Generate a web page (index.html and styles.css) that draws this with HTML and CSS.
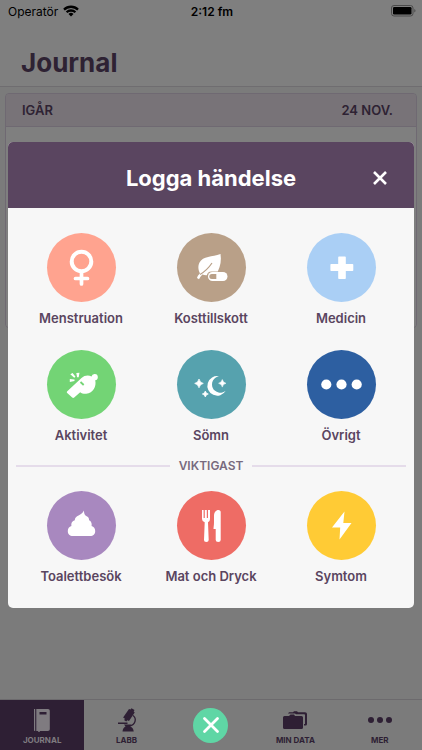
FILE: index.html
```html
<!DOCTYPE html>
<html lang="sv">
<head>
<meta charset="utf-8">
<meta name="viewport" content="width=device-width, initial-scale=1">
<title>Journal</title>
<link rel="stylesheet" href="styles.css">
</head>
<body>
<div class="app">
  <div class="status">
    <div class="carrier"><span>Operatör</span>
      <svg width="16" height="12" viewBox="0 0 16 12" aria-hidden="true"><g fill="none" stroke="#000" stroke-width="2.3"><path d="M1 4.6a10 10 0 0 1 14 0"/><path d="M3.6 7.3a6.3 6.3 0 0 1 8.8 0"/></g><path d="M8 11.6 5.5 9a3.6 3.6 0 0 1 5 0z"/></svg>
    </div>
    <time class="clock">2:12 fm</time>
    <div class="battery">
      <svg width="25" height="12" viewBox="0 0 25 12" aria-hidden="true"><rect x=".5" y=".5" width="21.500" height="10.500" rx="2.500" fill="none" stroke="#4b4b4b"/><rect x="2" y="2" width="18.500" height="7.500" rx="1.300"/><path d="M23.300 4c1.600.4 1.600 3.100 0 3.500z" fill="#4b4b4b"/></svg>
    </div>
  </div>
  <header class="page-head"><h1>Journal</h1></header>
  <main class="content">
    <section class="day">
      <div class="day-head"><h2>IGÅR</h2><span>24 NOV.</span></div>
      <div class="day-body"></div>
    </section>
  </main>
  <nav class="tabs">
    <a href="#journal" class="tab active">
      <svg width="18" height="24" viewBox="0 0 18 24" aria-hidden="true"><path fill="currentColor" d="M1 1h1.200v22H1.500Q1 23 1 22zM3.300 1H15q1.800 0 1.800 1.800v18.400Q16.800 23 15 23H7v1l-1-.6-1 .6v-1H3.300z"/><path fill="#2e1f34" d="M6.500 4h7v2.500h-7z"/></svg>
      <span>JOURNAL</span></a>
    <a href="#labb" class="tab">
      <svg width="20" height="24" viewBox="0 0 20 24" aria-hidden="true"><g fill="currentColor"><path d="m13.500 1.500 1-1.300 3 1.900-.8 1.500 1 .8-5.700 8.600-1.700-.8-1 1.200-2-1.200.5-1.600-1.700-1.200 5.900-8.400zM1 14.500h9.500V16H1zM5.500 23.500c.2-2.600 1.500-4.200 3-5l-1.500-2h7l-.8 2c2 .8 3.300 2.500 3.500 5z"/></g><path d="M16 7.500c4 3 2.500 9.500-3.500 10.500" fill="none" stroke="currentColor" stroke-width="1.300"/></svg>
      <span>LABB</span></a>
    <button class="fab" type="button" aria-label="Stäng meny">
      <svg width="18" height="18" viewBox="0 0 18 18" aria-hidden="true"><path d="m2.500 2.500 13 13m0-13-13 13" fill="none" stroke="#fff" stroke-width="2.800" stroke-linecap="round"/></svg>
    </button>
    <a href="#data" class="tab">
      <svg width="24" height="24" viewBox="0 0 24 24" aria-hidden="true"><g fill="currentColor"><path d="M0 9.500Q0 8 1.500 8H6l1.500-1.500H11L12 8h6.500Q20 8 20 9.500v10q0 1.500-1.500 1.500h-17Q0 21 0 19.500z"/><path d="m5 5.500 1-1.300h4l1-1h3l1 1h7q2 0 2 1.800V16q0 1.500-1.500 1.500H21V16h1V7q0-.8-.8-.8H13L12 5.500z"/></g></svg>
      <span>MIN DATA</span></a>
    <a href="#mer" class="tab">
      <svg width="24" height="24" viewBox="0 0 24 24" aria-hidden="true"><g fill="currentColor"><circle cx="3" cy="12" r="3"/><circle cx="12" cy="12" r="3"/><circle cx="21" cy="12" r="3"/></g></svg>
      <span>MER</span></a>
  </nav>

  <div class="modal" role="dialog" aria-labelledby="log-title">
    <div class="modal-head">
      <h2 id="log-title">Logga händelse</h2>
      <button class="close" type="button" aria-label="Stäng"><svg width="16" height="16" viewBox="0 0 16 16" aria-hidden="true"><path d="m2 2 12 12M14 2 2 14" fill="none" stroke="#fff" stroke-width="2.600"/></svg></button>
    </div>
    <div class="modal-body">
      <div class="events">
        <button class="event" type="button"><span class="disc salmon">
          <svg width="69" height="69" viewBox="0 0 69 69" aria-hidden="true"><g fill="none" stroke="#fff" stroke-linecap="round"><circle cx="34.500" cy="28.500" r="9.800" stroke-width="4"/><path d="M34.500 40v11M28.500 45.500h12" stroke-width="3.700"/></g></svg></span>Menstruation</button>
        <button class="event" type="button"><span class="disc brown">
          <svg width="69" height="69" viewBox="0 0 69 69" aria-hidden="true"><path fill="#fff" d="M43.500 21C35 24 26 23 22.500 29.500c-2 4-1 8 .5 10.800-1.500 1.600-2.600 3-3 4.700l2 1.200c.8-1.700 2-3.300 3.400-4.600 1.500.5 3 .7 4.400.6.6-2.300 2-3.600 4.400-3.700h6.600C43.500 33 44.500 27 43.500 21z"/><path d="M23 41.500c5-3 9-7 12-11.500" fill="none" stroke="#b9a088" stroke-width="1.200"/><rect x="31" y="39" width="19.500" height="9" rx="4.500" fill="#fff"/><path fill="#b9a088" d="M34.800 41h4.500v5h-4.500a2.500 2.500 0 0 1 0-5z"/></svg></span>Kosttillskott</button>
        <button class="event" type="button"><span class="disc sky">
          <svg width="69" height="69" viewBox="0 0 69 69" aria-hidden="true"><path fill="#fff" d="M32 23.500h6q.8 0 .8.800V31h6.700q.8 0 .8.800v5.400q0 .8-.8.800h-6.700v7.200q0 .8-.8.800h-6q-.8 0-.8-.8V38h-7q-.8 0-.8-.8v-5.400q0-.8.800-.8h7v-6.700q0-.8.800-.8z"/></svg></span>Medicin</button>
        <button class="event" type="button"><span class="disc green">
          <svg width="69" height="69" viewBox="0 0 69 69" aria-hidden="true"><path fill="#fff" d="M20 41.500 34.500 28c3-2.800 7-3.200 10-1.500a3.200 3.200 0 1 1 3.700 3.800c1.500 6-2 12.800-9 13.500-2.500.2-4.500-.4-6-1.500l-6 5.200q-1 .8-2 0l-5-4.500q-.8-.8-.2-1.500z"/><path d="m33.500 32 3.200 3" stroke="#73d475" stroke-width="1.800"/><path fill="#fff" d="m29.300 23 3.200-.3-.8 4.600h-1.600zM23.300 24.300l2.300-1.400 2.900 3.800-1.300 1zM22.800 29l4.700.5v1.600l-4.700.8z"/></svg></span>Aktivitet</button>
        <button class="event" type="button"><span class="disc teal">
          <svg width="69" height="69" viewBox="0 0 69 69" aria-hidden="true"><g fill="#fff"><path d="M42 26.200a8.300 8.300 0 1 0 6.700 14.500A9.800 9.800 0 1 1 42 26.200z"/><path d="M45.300 29.500q.7 3.200 3.700 3.800-3 .6-3.700 3.800-.7-3.200-3.700-3.800 3-.6 3.700-3.800z" stroke="#fff" stroke-width=".5"/><path d="M22 29q.8 3.600 4.300 4.400-3.500.8-4.300 4.400-.8-3.600-4.300-4.400 3.500-.8 4.300-4.400zM28.300 41q.5 2.500 3 3-2.500.5-3 3-.5-2.500-3-3 2.500-.5 3-3z" stroke="#fff" stroke-linejoin="round" stroke-width=".7"/></g></svg></span>Sömn</button>
        <button class="event" type="button"><span class="disc blue">
          <svg width="69" height="69" viewBox="0 0 69 69" aria-hidden="true"><g fill="#fff"><circle cx="19.300" cy="34.500" r="5.100"/><circle cx="34.500" cy="34.500" r="5.100"/><circle cx="49.700" cy="34.500" r="5.100"/></g></svg></span>Övrigt</button>
      </div>
      <div class="divider"><span>VIKTIGAST</span></div>
      <div class="events">
        <button class="event" type="button"><span class="disc purple">
          <svg width="69" height="69" viewBox="0 0 69 69" aria-hidden="true"><path fill="#fff" d="M36.800 19.500c-.8 2.300-2.500 3.500-4.800 4.800-3 1.500-4.300 2.600-4.200 5-2.600.6-4 2.700-3.400 5.700-2.200.8-3.600 2.500-3.600 5 0 3.500 2 5 5 5h17.400c3 0 5-1.500 5-5 0-2.500-1.400-4.200-3.600-5 .5-2.700-.5-5-2.500-5.800 0-2.500-1.300-3.500-3.300-4.400-1.500-.9-1.700-3.500-2-5.300z"/></svg></span>Toalettbesök</button>
        <button class="event" type="button"><span class="disc red">
          <svg width="69" height="69" viewBox="0 0 69 69" aria-hidden="true"><path fill="#fff" d="M25 19h1.600v8h1.200v-8h2v8H31v-8h2v9q0 2.500-2 3.200l.7 17.800q0 2-2.400 2T27 49l.7-17.800Q25 30.500 25 28zM41.500 19c1.500 0 2.200 1 2.200 2v28q0 2-2.500 2t-2.500-2V38h-2.200c0-2 .5-3.500.5-7v-6c0-3.600 1.800-6 4.500-6z"/></svg></span>Mat och Dryck</button>
        <button class="event" type="button"><span class="disc yellow">
          <svg width="69" height="69" viewBox="0 0 69 69" aria-hidden="true"><path fill="#fff" d="M37.500 20.500 25 36.500h8.200l-.7 12L44.500 32h-8.200z"/></svg></span>Symtom</button>
      </div>
    </div>
  </div>
</div>
</body>
</html>
```
FILE: styles.css
```css
* { box-sizing: border-box; }
body {
  margin: 0;
  background: #7b7b7b;
  color: #2e2233;
  font-family: Inter, "Liberation Sans", sans-serif;
}
h1, h2 { margin: 0; }
button { border: 0; padding: 0; font: inherit; color: inherit; background: none; cursor: pointer; }
svg { display: block; }

.app { position: relative; display: flex; flex-direction: column; min-height: 100vh; }

.status {
  display: grid;
  grid-template-columns: 1fr auto 1fr;
  align-items: center;
  height: 22px;
  padding: 0 6px 0 8px;
  background: #7f7f7f;
  color: #000;
  font-size: 12px;
}
.carrier { display: flex; align-items: center; gap: 5px; }
.clock { font-weight: 600; }
.battery { justify-self: end; }

.page-head {
  height: 65px;
  padding: 24px 21px 0;
  background: #7f7f7f;
  border-bottom: 1px solid #6f6d70;
}
.page-head h1 { font-size: 26px; line-height: 34px; font-weight: 700; }

.content { flex: 1; padding: 6px 5px; }
.day { border: 1px solid #6f6972; border-radius: 4px; overflow: hidden; }
.day-head {
  display: flex;
  align-items: center;
  justify-content: space-between;
  height: 33px;
  padding: 0 23px 0 16px;
  background: #787378;
  border-bottom: 1px solid #6f6972;
  font-size: 13px;
  font-weight: 600;
}
.day-head h2 { font-size: inherit; font-weight: inherit; }
.day-body { height: 200px; background: #7f7f7f; }

.tabs {
  display: grid;
  grid-template-columns: repeat(5, 1fr);
  height: 51px;
  border-top: 1px solid #6c6a6d;
  background: #7b7b7b;
}
.tab {
  display: flex;
  flex-direction: column;
  align-items: center;
  gap: 2px;
  padding-top: 8px;
  color: #2e1f34;
  font-size: 8px;
  line-height: 12px;
  font-weight: 700;
  text-decoration: none;
}
.tab.active { background: #2e1f34; color: #7f7b80; }
.fab {
  display: grid;
  place-items: center;
  place-self: center;
  width: 35px;
  height: 35px;
  border-radius: 50%;
  background: #5fd6a5;
}

.modal {
  position: absolute;
  top: 142px;
  left: 8px;
  right: 8px;
  overflow: hidden;
  border-radius: 5px;
  background: #f7f7f7;
  color: #5a4560;
}
.modal-head {
  display: grid;
  grid-template-columns: 1fr auto 1fr;
  align-items: center;
  height: 66px;
  padding: 6px 26px 0;
  background: #5a4560;
  color: #fff;
}
.modal-head h2 { grid-column: 2; font-size: 22px; line-height: 28px; font-weight: 700; }
.close { justify-self: end; }
.modal-body { padding: 25px 8px 23px; }

.events { display: grid; grid-template-columns: repeat(3, 1fr); row-gap: 23px; }
.event {
  display: flex;
  flex-direction: column;
  align-items: center;
  gap: 7px;
  font-size: 13px;
  line-height: 18px;
  font-weight: 600;
}
.disc { width: 69px; height: 69px; border-radius: 50%; }
.salmon { background: #ffa38f; }
.brown { background: #b9a088; }
.sky { background: #aacff5; }
.green { background: #73d475; }
.teal { background: #56a2ae; }
.blue { background: #2d5fa1; }
.purple { background: #a888bf; }
.red { background: #ee6c65; }
.yellow { background: #ffcb35; }

.divider {
  display: flex;
  align-items: center;
  gap: 9px;
  padding: 14px 0 17px;
  color: #786a7e;
  font-size: 12px;
  line-height: 16px;
  font-weight: 600;
}
.divider::before, .divider::after { content: ""; flex: 1; height: 2px; background: #e5dcea; }
```
